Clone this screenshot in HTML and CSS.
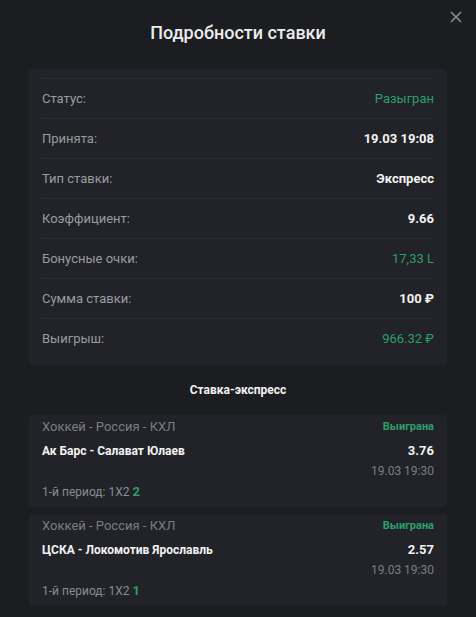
FILE: index.html
```html
<!DOCTYPE html>
<html lang="ru">
<head>
<meta charset="utf-8">
<link rel="stylesheet" href="styles.css">
</head>
<body>
<div class="modal">
  <button class="close" aria-label="Закрыть">
    <svg width="12" height="12" viewBox="0 0 12 12"><path d="M1 1 L11 11 M11 1 L1 11" stroke="#8b8d91" stroke-width="1.6" fill="none"/></svg>
  </button>
  <h1 class="title">Подробности ставки</h1>
  <div class="details">
    <div class="row"><span class="label">Статус:</span><span class="val green">Разыгран</span></div>
    <div class="row"><span class="label">Принята:</span><span class="val bold">19.03 19:08</span></div>
    <div class="row"><span class="label">Тип ставки:</span><span class="val bold">Экспресс</span></div>
    <div class="row"><span class="label">Коэффициент:</span><span class="val bold">9.66</span></div>
    <div class="row"><span class="label">Бонусные очки:</span><span class="val green">17,33 L</span></div>
    <div class="row"><span class="label">Сумма ставки:</span><span class="val bold">100 ₽</span></div>
    <div class="row"><span class="label">Выигрыш:</span><span class="val green">966.32 ₽</span></div>
  </div>
  <h2 class="section">Ставка-экспресс</h2>
  <div class="event">
    <div class="line l1"><span class="league">Хоккей - Россия - КХЛ</span><span class="status">Выиграна</span></div>
    <div class="line l2"><span class="match">Ак Барс - Салават Юлаев</span><span class="odd">3.76</span></div>
    <div class="line l3"><span class="date">19.03 19:30</span></div>
    <div class="line l4"><span class="market">1-й период: 1Х2 <span class="pick">2</span></span></div>
  </div>
  <div class="event">
    <div class="line l1"><span class="league">Хоккей - Россия - КХЛ</span><span class="status">Выиграна</span></div>
    <div class="line l2"><span class="match">ЦСКА - Локомотив Ярославль</span><span class="odd">2.57</span></div>
    <div class="line l3"><span class="date">19.03 19:30</span></div>
    <div class="line l4"><span class="market">1-й период: 1Х2 <span class="pick">1</span></span></div>
  </div>
</div>
</body>
</html>
```
FILE: styles.css
```css
html, body {
  margin: 0;
  padding: 0;
  background: #1b1d21;
  font-family: Roboto, "Liberation Sans", Arial, sans-serif;
  color: #e9eaeb;
}
.modal {
  position: relative;
  width: 476px;
  height: 617px;
  padding: 0 29px;
  box-sizing: border-box;
  overflow: hidden;
}
.close {
  position: absolute;
  top: 11px;
  right: 14px;
  width: 12px;
  height: 12px;
  padding: 0;
  border: 0;
  background: none;
  display: block;
}
.close svg { display: block; }
.title {
  margin: 0;
  height: 69px;
  line-height: 66px;
  text-align: center;
  font-size: 18px;
  font-weight: 500;
  color: #ececec;
}
.details {
  background: #212328;
  border-radius: 3px;
  padding: 9px 13px 7px;
}
.row {
  height: 40px;
  border-top: 1px solid #2c2e33;
  box-sizing: border-box;
  display: flex;
  justify-content: space-between;
  align-items: center;
  font-size: 13px;
}
.label { color: #9a9ca1; }
.val.bold { color: #f2f2f2; font-weight: 700; }
.green { color: #2c9f6b; }
.section {
  margin: 0;
  height: 50px;
  line-height: 51px;
  text-align: center;
  font-size: 12px;
  font-weight: 700;
  color: #f2f2f2;
}
.event {
  background: #212328;
  border-radius: 3px;
  padding: 4px 13px 7px;
  margin-bottom: 7px;
}
.line {
  display: flex;
  justify-content: space-between;
  line-height: 16px;
  height: 16px;
}
.l2 { margin-top: 8px; }
.l3 { margin-top: 4px; justify-content: flex-end; }
.l4 { margin-top: 5px; }
.league { color: #7b7d82; font-size: 13px; }
.status { color: #2c9f6b; font-size: 11px; font-weight: 700; }
.match { color: #f2f2f2; font-size: 12px; font-weight: 700; }
.odd { color: #f2f2f2; font-size: 13px; font-weight: 700; }
.date { color: #7b7d82; font-size: 12px; }
.market { color: #8a8c91; font-size: 12px; }
.pick { color: #2c9f6b; font-weight: 700; font-size: 13px; }
```
